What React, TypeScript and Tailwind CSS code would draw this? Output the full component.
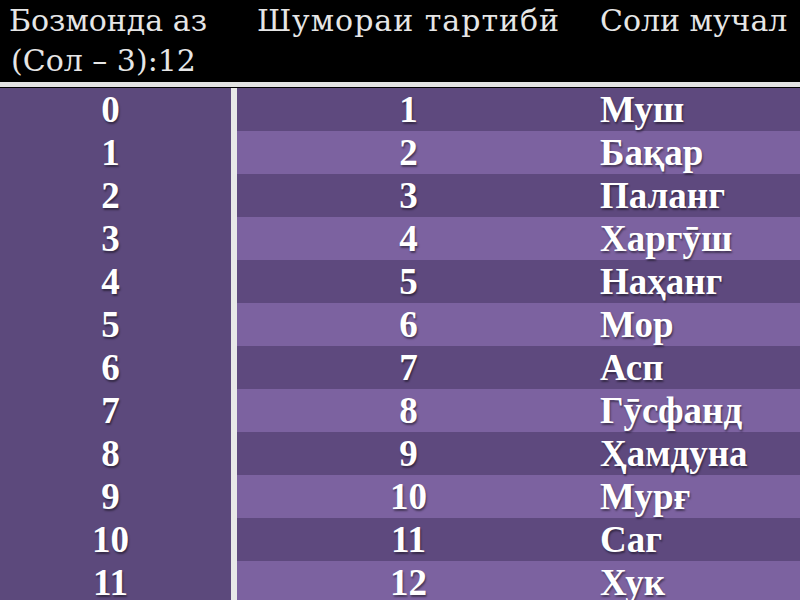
const rows = [
  ["0", "1", "Муш"],
  ["1", "2", "Бақар"],
  ["2", "3", "Паланг"],
  ["3", "4", "Харгӯш"],
  ["4", "5", "Наҳанг"],
  ["5", "6", "Мор"],
  ["6", "7", "Асп"],
  ["7", "8", "Гӯсфанд"],
  ["8", "9", "Ҳамдуна"],
  ["9", "10", "Мурғ"],
  ["10", "11", "Саг"],
  ["11", "12", "Хук"],
];

const cell = "h-[43px] flex items-center text-[37px] font-bold text-white [text-shadow:1px_2px_2px_rgba(0,0,0,0.45)]";

export default function App() {
  return (
    <div className="w-[800px] h-[600px] overflow-hidden bg-black font-['Liberation_Serif',serif]">
      {/* header */}
      <div className="h-[82px] flex text-[#e6e6e6] text-[30px] font-['DejaVu_Serif',serif] leading-[40px]">
        <div className="w-[237px] pl-[9px] pt-[1px]">
          <div>Бозмонда аз</div>
          <div className="pl-[2px]">(Сол – 3):12</div>
        </div>
        <div className="w-[343px] text-center pt-[1px] tracking-[1px]">Шумораи тартибӣ</div>
        <div className="pl-[20px] pt-[1px]">Соли мучал</div>
      </div>
      <div className="h-[5px] bg-[#e2e2e2]" />
      <div className="flex pt-[1px]">
        <div className="w-[231px] bg-[#5c497c]">
          {rows.map((r) => (
            <div key={r[0]} className={`${cell} justify-center pr-[10px]`}>
              {r[0]}
            </div>
          ))}
        </div>
        <div className="w-[6px] bg-[#e8e8e8]" />
        <div className="flex-1">
          {rows.map((r, i) => (
            <div key={r[1]} className={`flex ${i % 2 === 0 ? "bg-[#5e497e]" : "bg-[#7c62a0]"}`}>
              <div className={`${cell} w-[343px] justify-center`}>{r[1]}</div>
              <div className={`${cell} pl-[20px]`}>{r[2]}</div>
            </div>
          ))}
        </div>
      </div>
    </div>
  );
}
